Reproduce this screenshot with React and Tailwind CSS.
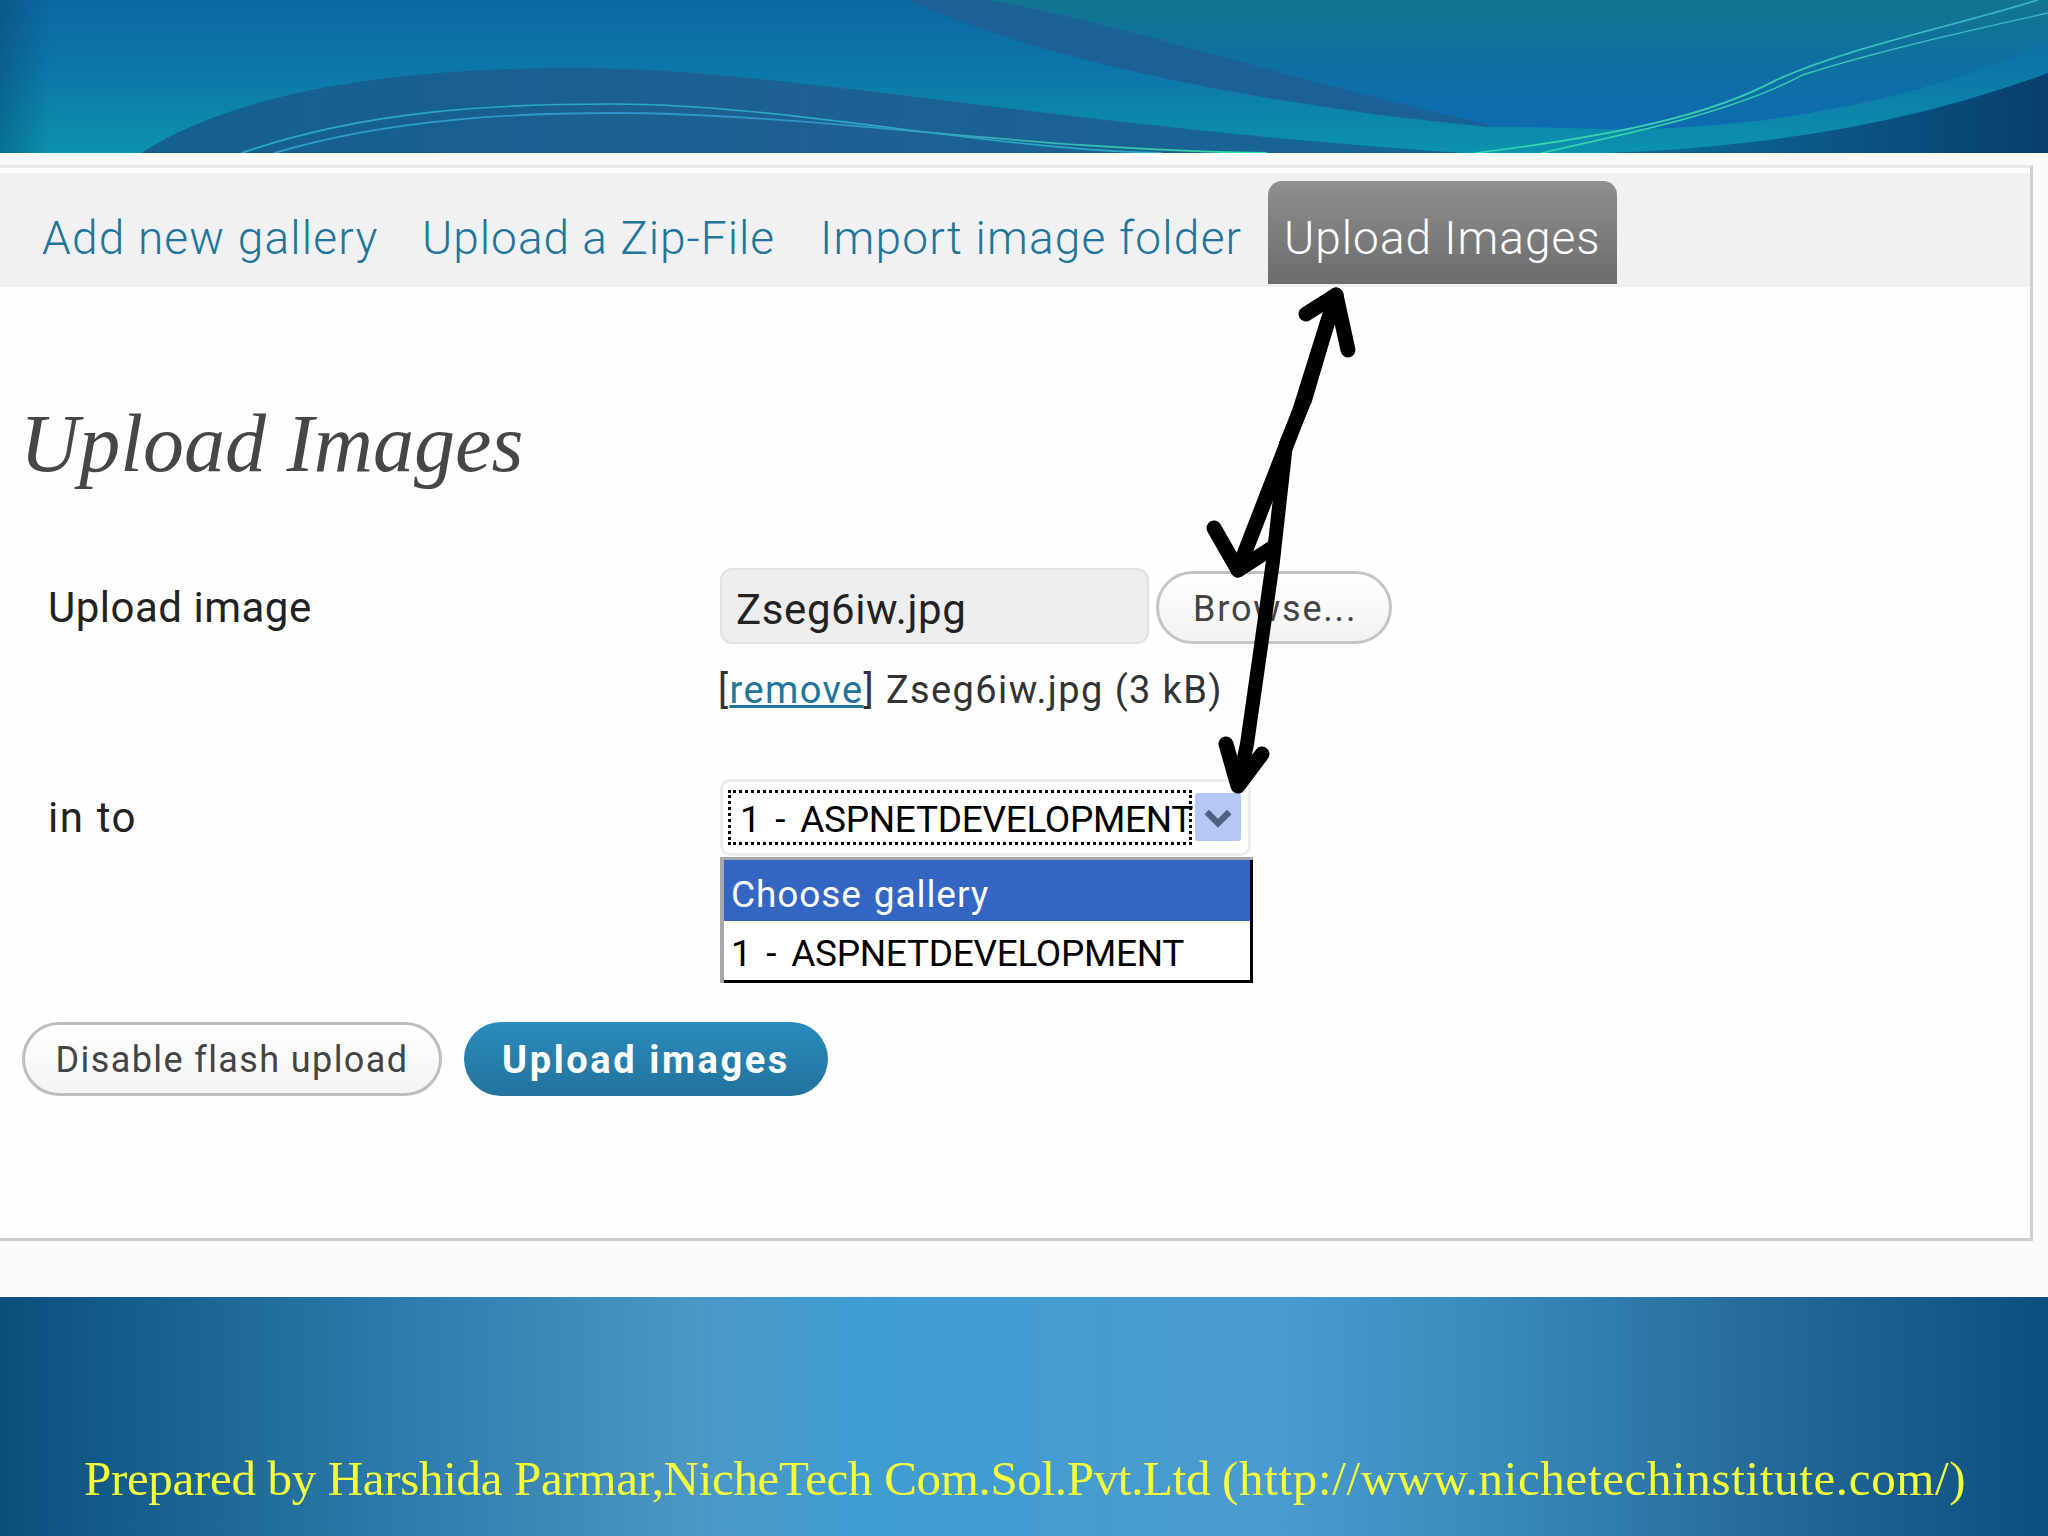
import React from 'react'

function HeaderArt() {
  return (
    <svg viewBox="0 0 1568 153" preserveAspectRatio="none" className="block w-full h-full">
      <defs>
        <linearGradient id="base" x1="0" y1="0" x2="0" y2="1">
          <stop offset="0" stopColor="#0c68a2" />
          <stop offset="0.45" stopColor="#0d76a8" />
          <stop offset="1" stopColor="#0c92ae" />
        </linearGradient>
        <linearGradient id="blue" x1="0" y1="0" x2="0" y2="1">
          <stop offset="0" stopColor="#13758f" />
          <stop offset="0.45" stopColor="#0f70a0" />
          <stop offset="1" stopColor="#0e6bb0" />
        </linearGradient>
        <linearGradient id="swoosh" x1="0" y1="0" x2="1" y2="0">
          <stop offset="0" stopColor="#14608f" />
          <stop offset="0.5" stopColor="#1f5f93" />
          <stop offset="1" stopColor="#176596" />
        </linearGradient>
        <linearGradient id="corner" x1="0" y1="0" x2="1" y2="0">
          <stop offset="0" stopColor="#0d6d9f" />
          <stop offset="1" stopColor="#083f6c" />
        </linearGradient>
        <linearGradient id="edge" x1="0" y1="0" x2="1" y2="0">
          <stop offset="0" stopColor="#063f68" stopOpacity="0.4" />
          <stop offset="1" stopColor="#063f68" stopOpacity="0" />
        </linearGradient>
        <linearGradient id="glow" x1="0" y1="0" x2="1" y2="0">
          <stop offset="0" stopColor="#2a9fd0" />
          <stop offset="0.55" stopColor="#2f90c8" />
          <stop offset="1" stopColor="#37e0a0" />
        </linearGradient>
        <linearGradient id="rise" x1="0" y1="0" x2="1" y2="0">
          <stop offset="0" stopColor="#35d8a8" />
          <stop offset="0.5" stopColor="#35d0b0" />
          <stop offset="1" stopColor="#3ab0d0" />
        </linearGradient>
      </defs>
      <rect width="1568" height="153" fill="url(#base)" />
      <rect width="40" height="153" fill="url(#edge)" />
      <path d="M108 153C190 85 320 68 440 68C600 68 800 125 1120 153Z" fill="url(#swoosh)" />
      <path d="M755 0L1568 0L1568 43C1450 110 1320 135 1200 128C1170 127 1150 127 1140 127C1000 90 850 20 755 0Z" fill="url(#blue)" />
      <path d="M695 0L755 0C850 20 1000 85 1140 125L1140 127C930 100 780 50 695 0Z" fill="#1c6096" />
      <path d="M1230 153C1380 145 1480 115 1568 73L1568 153Z" fill="url(#corner)" />
      <path d="M185 153C280 110 380 104 470 104C600 104 760 150 890 153" fill="none" stroke="#2aa9c4" strokeWidth="1.6" />
      <path d="M210 153C300 118 400 113 470 113C620 113 780 150 970 153" fill="none" stroke="url(#glow)" strokeWidth="1.8" />
      <path d="M1130 153C1240 135 1310 115 1360 80C1420 45 1500 25 1560 0" fill="none" stroke="url(#rise)" strokeWidth="1.6" />
      <path d="M1180 153C1260 130 1330 110 1380 75C1440 50 1510 30 1568 13" fill="none" stroke="url(#rise)" strokeWidth="1.4" />
    </svg>
  )
}

function Arrows() {
  return (
    <svg viewBox="0 0 2048 1536" className="absolute inset-0 w-[2048px] h-[1536px] pointer-events-none">
      <g fill="none" stroke="#000" strokeWidth="15" strokeLinecap="round" strokeLinejoin="round">
        <path d="M1306 314L1336 295L1348 350" />
        <path d="M1336 295L1300 410L1238 570" />
        <path d="M1214 528L1238 570L1272 548" />
        <path d="M1336 295L1305 400L1286 444L1273 561L1260 653L1247 744L1238 786" strokeWidth="14" />
        <path d="M1226 744L1238 786L1262 754" />
      </g>
    </svg>
  )
}

const bodyFont = "font-['Roboto','Liberation_Sans',sans-serif]"

export default function App() {
  return (
    <div className="relative w-[2048px] h-[1536px] overflow-hidden flex flex-col bg-[#fafafb]">
      <div className="h-[153px] shrink-0">
        <HeaderArt />
      </div>

      <div className="flex-1 pt-[12px]">
        <div className="w-[2033px] h-[1076px] border-t-[3px] border-r-[3px] border-b-[3px] border-t-[#e9e9eb] border-r-[#d0d0d2] border-b-[#cdcdcf] bg-[#fffeff] pt-[5px]">
          {/* tabs */}
          <div className={`h-[114px] bg-[#f1f1f3] flex items-end pl-[42px] text-[#21759b] text-[46px] font-light tracking-[1px] ${bodyFont}`}>
            <a className="h-[75px] leading-[52px] whitespace-nowrap w-[335px] tracking-[1.2px]">Add new gallery</a>
            <a className="h-[75px] leading-[52px] whitespace-nowrap w-[353px] ml-[45px]">Upload a Zip-File</a>
            <a className="h-[75px] leading-[52px] whitespace-nowrap w-[421px] ml-[45px] tracking-[1.2px]">Import image folder</a>
            <a className="ml-[27px] mb-[3px] w-[349px] h-[103px] pt-[31px] pl-[16px] leading-[52px] whitespace-nowrap rounded-t-[14px] text-white bg-linear-to-b from-[#8f8f90] to-[#6c6c6d]">Upload Images</a>
          </div>

          {/* page title */}
          <h2 className="mt-[117px] ml-[20px] h-[80px] text-[82px] leading-[80px] italic text-[#464646] font-['Liberation_Serif',serif] whitespace-nowrap">Upload Images</h2>

          <div className={`mt-[84px] pl-[48px] flex text-[#222] ${bodyFont}`}>
            <div className="w-[672px] shrink-0">
              <div className="h-[76px] text-[42px] leading-[80px] tracking-[0.5px]">Upload image</div>
              <div className="mt-[135px] h-[77px] text-[42px] leading-[78px] tracking-[1.6px]">in to</div>
            </div>

            <div>
              <div className="flex items-end h-[76px]">
                <div className="w-[429px] h-[76px] rounded-[12px] border-2 border-[#e2e2e4] bg-[#eeeef0] pl-[14px] text-[42px] leading-[80px] tracking-[0.6px]">Zseg6iw.jpg</div>
                <div className="ml-[7px] w-[236px] h-[73px] rounded-full border-[3px] border-[#c4c4c6] bg-linear-to-b from-white to-[#f2f2f3] pl-[34px] text-[36px] leading-[71px] tracking-[1.8px] text-[#444]">Browse...</div>
              </div>

              <div className="mt-[24px] h-[45px] -ml-[2px] text-[38px] leading-[45px] text-[#333] tracking-[1.4px] whitespace-nowrap">
                [<a className="text-[#21759b] underline">remove</a>] Zseg6iw.jpg (3 kB)
              </div>

              <div className="relative mt-[66px] w-[531px] h-[77px] rounded-[10px] border-[3px] border-[#ececee] bg-white">
                <div className="absolute left-[5px] top-[8px] w-[464px] h-[55px] border-[3px] border-dotted border-black text-black text-[37px] leading-[54px] pl-[9px] tracking-[-0.3px] [word-spacing:6px] whitespace-nowrap">1 - ASPNETDEVELOPMENT</div>
                <div className="absolute left-[472px] top-[11px] w-[46px] h-[48px] rounded-[3px] bg-[#b5c8f5] flex items-center justify-center">
                  <svg viewBox="0 0 24 24" className="w-[30px] h-[30px]">
                    <path d="M3 8L12 17L21 8" fill="none" stroke="#4d6185" strokeWidth="5" />
                  </svg>
                </div>

                {/* open list */}
                <div className="absolute -left-[3px] top-[75px] w-[533px] h-[126px] border-l-[4px] border-t-[3px] border-[#a9a9a9] bg-white text-[37px] text-black">
                  <div className="h-[61px] mr-[3px] bg-[#3366c2] text-white pl-[7px] leading-[70px] tracking-[0.9px] [word-spacing:2px]">Choose gallery</div>
                  <div className="h-[59px] pl-[7px] leading-[66px] tracking-[-0.3px] [word-spacing:6px]">1 - ASPNETDEVELOPMENT</div>
                  <div className="absolute inset-y-0 right-0 w-[3px] bg-black" />
                  <div className="absolute bottom-0 inset-x-0 h-[3px] bg-black" />
                </div>
              </div>
            </div>
          </div>

          <div className={`mt-[166px] ml-[22px] flex ${bodyFont}`}>
            <div className="w-[420px] h-[74px] rounded-full border-[3px] border-[#bdbdbf] bg-linear-to-b from-white to-[#f4f4f5] text-center text-[36px] leading-[71px] tracking-[1.4px] text-[#444]">Disable flash upload</div>
            <div className="ml-[22px] w-[364px] h-[74px] rounded-full bg-linear-to-b from-[#298cbd] to-[#23729c] text-center text-white font-bold text-[38px] leading-[76px] tracking-[2.6px]">Upload images</div>
          </div>
        </div>
      </div>

      <div className="h-[239px] shrink-0 bg-[linear-gradient(90deg,#0a4f7c_0%,#2a78a8_18%,#4b97c6_34%,#3f9dd2_42%,#4a9bd0_62%,#3a8cbe_72%,#286f9e_84%,#0b4f7e_100%)] pt-[155px] pl-[84px] text-[49px] leading-[54px] text-[#f4ff3a] font-['Liberation_Serif',serif] whitespace-nowrap">
        <span className="tracking-[-0.32px]">Prepared by Harshida Parmar,NicheTech Com.Sol.Pvt.Ltd </span>
        <span className="tracking-[0.65px]">(http://www.nichetechinstitute.com/)</span>
      </div>

      <Arrows />
    </div>
  )
}
